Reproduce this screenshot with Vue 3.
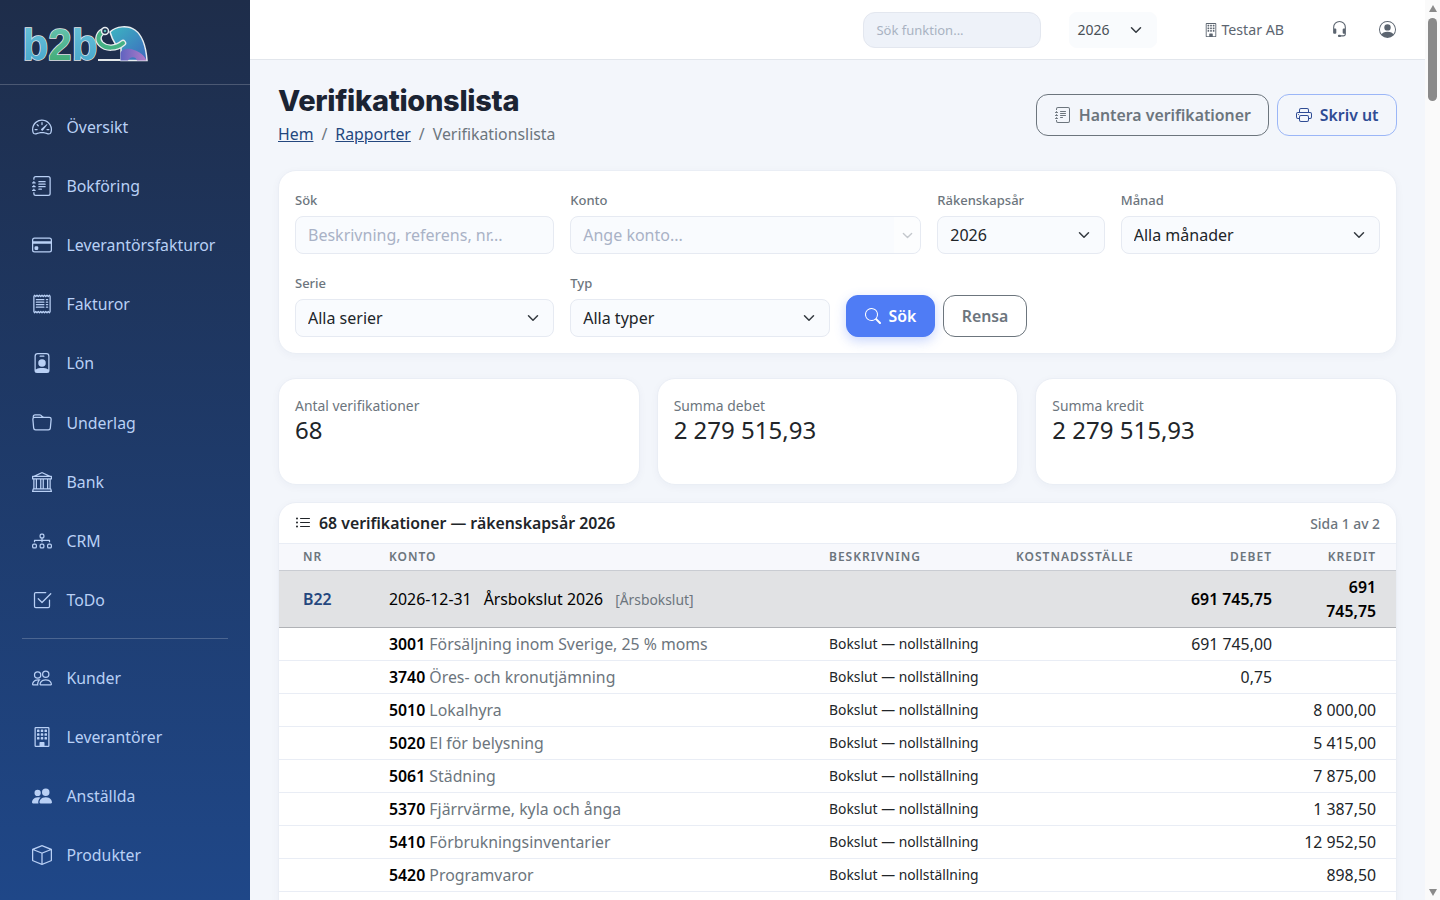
<script setup>
import { h } from 'vue'

const icons = {
  speedometer: [
    'M8 4a.5.5 0 0 1 .5.5V6a.5.5 0 0 1-1 0V4.5A.5.5 0 0 1 8 4M3.732 5.732a.5.5 0 0 1 .707 0l.915.914a.5.5 0 1 1-.708.708l-.914-.915a.5.5 0 0 1 0-.707M2 10a.5.5 0 0 1 .5-.5h1.586a.5.5 0 0 1 0 1H2.5A.5.5 0 0 1 2 10m9.5 0a.5.5 0 0 1 .5-.5h1.5a.5.5 0 0 1 0 1H12a.5.5 0 0 1-.5-.5m.754-4.246a.39.39 0 0 0-.527-.02L7.547 9.31a.91.91 0 1 0 1.302 1.258l3.434-4.297a.39.39 0 0 0-.029-.518z',
    'M0 10a8 8 0 1 1 15.547 2.661c-.442 1.253-1.845 1.602-2.932 1.25C11.309 13.488 9.475 13 8 13c-1.474 0-3.31.488-4.615.911-1.087.352-2.49.003-2.932-1.25A8 8 0 0 1 0 10m8-7a7 7 0 0 0-6.603 9.329c.203.575.923.876 1.68.63C4.397 12.533 6.358 12 8 12s3.604.532 4.923.96c.757.245 1.477-.056 1.68-.631A7 7 0 0 0 8 3'
  ],
  journal: [
    'M5 10.5a.5.5 0 0 1 .5-.5h2a.5.5 0 0 1 0 1h-2a.5.5 0 0 1-.5-.5m0-2a.5.5 0 0 1 .5-.5h5a.5.5 0 0 1 0 1h-5a.5.5 0 0 1-.5-.5m0-2a.5.5 0 0 1 .5-.5h5a.5.5 0 0 1 0 1h-5a.5.5 0 0 1-.5-.5m0-2a.5.5 0 0 1 .5-.5h5a.5.5 0 0 1 0 1h-5a.5.5 0 0 1-.5-.5',
    'M3 0h10a2 2 0 0 1 2 2v12a2 2 0 0 1-2 2H3a2 2 0 0 1-2-2v-1h1v1a1 1 0 0 0 1 1h10a1 1 0 0 0 1-1V2a1 1 0 0 0-1-1H3a1 1 0 0 0-1 1v1H1V2a2 2 0 0 1 2-2',
    'M1 5v-.5a.5.5 0 0 1 1 0V5h.5a.5.5 0 0 1 0 1h-2a.5.5 0 0 1 0-1zm0 3v-.5a.5.5 0 0 1 1 0V8h.5a.5.5 0 0 1 0 1h-2a.5.5 0 0 1 0-1zm0 3v-.5a.5.5 0 0 1 1 0v.5h.5a.5.5 0 0 1 0 1h-2a.5.5 0 0 1 0-1z'
  ],
  card: [
    'M0 4a2 2 0 0 1 2-2h12a2 2 0 0 1 2 2v8a2 2 0 0 1-2 2H2a2 2 0 0 1-2-2zm2-1a1 1 0 0 0-1 1v1h14V4a1 1 0 0 0-1-1zm13 4H1v5a1 1 0 0 0 1 1h12a1 1 0 0 0 1-1z',
    'M2 10a1 1 0 0 1 1-1h1a1 1 0 0 1 1 1v1a1 1 0 0 1-1 1H3a1 1 0 0 1-1-1z'
  ],
  receipt: [
    'M1.92.506a.5.5 0 0 1 .434.14L3 1.293l.646-.647a.5.5 0 0 1 .708 0L5 1.293l.646-.647a.5.5 0 0 1 .708 0L7 1.293l.646-.647a.5.5 0 0 1 .708 0L9 1.293l.646-.647a.5.5 0 0 1 .708 0l.646.647.646-.647a.5.5 0 0 1 .708 0l.646.647.646-.647a.5.5 0 0 1 .801.13l.5 1A.5.5 0 0 1 15 2v12a.5.5 0 0 1-.053.224l-.5 1a.5.5 0 0 1-.8.13L13 14.707l-.646.647a.5.5 0 0 1-.708 0L11 14.707l-.646.647a.5.5 0 0 1-.708 0L9 14.707l-.646.647a.5.5 0 0 1-.708 0L7 14.707l-.646.647a.5.5 0 0 1-.708 0L5 14.707l-.646.647a.5.5 0 0 1-.708 0L3 14.707l-.646.647a.5.5 0 0 1-.801-.13l-.5-1A.5.5 0 0 1 1 14V2a.5.5 0 0 1 .053-.224l.5-1a.5.5 0 0 1 .367-.27m.217 1.338L2 2.118v11.764l.137.274.51-.51a.5.5 0 0 1 .707 0l.646.647.646-.646a.5.5 0 0 1 .708 0l.646.646.646-.646a.5.5 0 0 1 .708 0l.646.646.646-.646a.5.5 0 0 1 .708 0l.646.646.646-.646a.5.5 0 0 1 .708 0l.646.646.646-.646a.5.5 0 0 1 .708 0l.509.509.137-.274V2.118l-.137-.274-.51.51a.5.5 0 0 1-.707 0L12 1.707l-.646.647a.5.5 0 0 1-.708 0L10 1.707l-.646.647a.5.5 0 0 1-.708 0L8 1.707l-.646.647a.5.5 0 0 1-.708 0L6 1.707l-.646.647a.5.5 0 0 1-.708 0L4 1.707l-.646.647a.5.5 0 0 1-.708 0z',
    'M3 4.5a.5.5 0 0 1 .5-.5h6a.5.5 0 1 1 0 1h-6a.5.5 0 0 1-.5-.5m0 2a.5.5 0 0 1 .5-.5h6a.5.5 0 1 1 0 1h-6a.5.5 0 0 1-.5-.5m0 2a.5.5 0 0 1 .5-.5h6a.5.5 0 1 1 0 1h-6a.5.5 0 0 1-.5-.5m0 2a.5.5 0 0 1 .5-.5h6a.5.5 0 0 1 0 1h-6a.5.5 0 0 1-.5-.5m8-6a.5.5 0 0 1 .5-.5h1a.5.5 0 0 1 0 1h-1a.5.5 0 0 1-.5-.5m0 2a.5.5 0 0 1 .5-.5h1a.5.5 0 0 1 0 1h-1a.5.5 0 0 1-.5-.5m0 2a.5.5 0 0 1 .5-.5h1a.5.5 0 0 1 0 1h-1a.5.5 0 0 1-.5-.5m0 2a.5.5 0 0 1 .5-.5h1a.5.5 0 0 1 0 1h-1a.5.5 0 0 1-.5-.5'
  ],
  badge: [
    'M6.5 2a.5.5 0 0 0 0 1h3a.5.5 0 0 0 0-1zM11 8a3 3 0 1 1-6 0 3 3 0 0 1 6 0',
    'M4.5 0A2.5 2.5 0 0 0 2 2.5V14a2 2 0 0 0 2 2h8a2 2 0 0 0 2-2V2.5A2.5 2.5 0 0 0 11.5 0zM3 2.5A1.5 1.5 0 0 1 4.5 1h7A1.5 1.5 0 0 1 13 2.5v10.795a4.2 4.2 0 0 0-.776-.492C11.392 12.387 10.063 12 8 12s-3.392.387-4.224.803a4.2 4.2 0 0 0-.776.492z'
  ],
  folder: [
    'M.54 3.87.5 3a2 2 0 0 1 2-2h3.672a2 2 0 0 1 1.414.586l.828.828A2 2 0 0 0 9.828 3h3.982a2 2 0 0 1 1.992 2.181l-.637 7A2 2 0 0 1 13.174 14H2.826a2 2 0 0 1-1.991-1.819l-.637-7a2 2 0 0 1 .342-1.31zM2.19 4a1 1 0 0 0-.996 1.09l.637 7a1 1 0 0 0 .995.91h10.348a1 1 0 0 0 .995-.91l.637-7A1 1 0 0 0 13.81 4zm4.69-1.707A1 1 0 0 0 6.172 2H2.5a1 1 0 0 0-1 .981l.006.139q.323-.119.684-.12h5.396z'
  ],
  bank: [
    'm8 0 6.61 3h.89a.5.5 0 0 1 .5.5v2a.5.5 0 0 1-.5.5H15v7a.5.5 0 0 1 .485.38l.5 2a.498.498 0 0 1-.485.62H.5a.498.498 0 0 1-.485-.62l.5-2A.5.5 0 0 1 1 13V6H.5a.5.5 0 0 1-.5-.5v-2A.5.5 0 0 1 .5 3h.89zM3.777 3h8.447L8 1zM2 6v7h1V6zm2 0v7h2.5V6zm3.5 0v7h1V6zm2 0v7H12V6zM13 6v7h1V6zm2-1V4H1v1zm-.39 9H1.39l-.25 1h13.72z'
  ],
  diagram: [
    'M6 3.5A1.5 1.5 0 0 1 7.5 2h1A1.5 1.5 0 0 1 10 3.5v1A1.5 1.5 0 0 1 8.5 6v1H14a.5.5 0 0 1 .5.5v1a.5.5 0 0 1-1 0V8h-5v.5a.5.5 0 0 1-1 0V8h-5v.5a.5.5 0 0 1-1 0v-1A.5.5 0 0 1 2 7h5.5V6A1.5 1.5 0 0 1 6 4.5zM8.5 5a.5.5 0 0 0 .5-.5v-1a.5.5 0 0 0-.5-.5h-1a.5.5 0 0 0-.5.5v1a.5.5 0 0 0 .5.5zM0 11.5A1.5 1.5 0 0 1 1.5 10h1A1.5 1.5 0 0 1 4 11.5v1A1.5 1.5 0 0 1 2.5 14h-1A1.5 1.5 0 0 1 0 12.5zm1.5-.5a.5.5 0 0 0-.5.5v1a.5.5 0 0 0 .5.5h1a.5.5 0 0 0 .5-.5v-1a.5.5 0 0 0-.5-.5zm4.5.5A1.5 1.5 0 0 1 7.5 10h1a1.5 1.5 0 0 1 1.5 1.5v1A1.5 1.5 0 0 1 8.5 14h-1A1.5 1.5 0 0 1 6 12.5zm1.5-.5a.5.5 0 0 0-.5.5v1a.5.5 0 0 0 .5.5h1a.5.5 0 0 0 .5-.5v-1a.5.5 0 0 0-.5-.5zm4.5.5a1.5 1.5 0 0 1 1.5-1.5h1a1.5 1.5 0 0 1 1.5 1.5v1a1.5 1.5 0 0 1-1.5 1.5h-1a1.5 1.5 0 0 1-1.5-1.5zm1.5-.5a.5.5 0 0 0-.5.5v1a.5.5 0 0 0 .5.5h1a.5.5 0 0 0 .5-.5v-1a.5.5 0 0 0-.5-.5z'
  ],
  check: [
    'M3 14.5A1.5 1.5 0 0 1 1.5 13V3A1.5 1.5 0 0 1 3 1.5h8a.5.5 0 0 1 0 1H3a.5.5 0 0 0-.5.5v10a.5.5 0 0 0 .5.5h10a.5.5 0 0 0 .5-.5V8a.5.5 0 0 1 1 0v5a1.5 1.5 0 0 1-1.5 1.5z',
    'm8.354 10.354 7-7a.5.5 0 0 0-.708-.708L8 9.293 5.354 6.646a.5.5 0 1 0-.708.708l3 3a.5.5 0 0 0 .708 0'
  ],
  people: [
    'M15 14s1 0 1-1-1-4-5-4-5 3-5 4 1 1 1 1zm-7.978-1L7 12.996c.001-.264.167-1.03.76-1.72C8.312 10.629 9.282 10 11 10c1.717 0 2.687.63 3.24 1.276.593.69.758 1.457.76 1.72l-.008.002-.014.002zM11 7a2 2 0 1 0 0-4 2 2 0 0 0 0 4m3-2a3 3 0 1 1-6 0 3 3 0 0 1 6 0M6.936 9.28a6 6 0 0 0-1.23-.247A7 7 0 0 0 5 9c-4 0-5 3-5 4q0 1 1 1h4.216A2.24 2.24 0 0 1 5 13c0-1.01.377-2.042 1.09-2.904.243-.294.526-.569.846-.816M4.92 10A5.5 5.5 0 0 0 4 13H1c0-.26.164-1.03.76-1.724.545-.636 1.492-1.256 3.16-1.275ZM1.5 5.5a3 3 0 1 1 6 0 3 3 0 0 1-6 0m3-2a2 2 0 1 0 0 4 2 2 0 0 0 0-4'
  ],
  building: [
    'M4 2.5a.5.5 0 0 1 .5-.5h1a.5.5 0 0 1 .5.5v1a.5.5 0 0 1-.5.5h-1a.5.5 0 0 1-.5-.5zm3 0a.5.5 0 0 1 .5-.5h1a.5.5 0 0 1 .5.5v1a.5.5 0 0 1-.5.5h-1a.5.5 0 0 1-.5-.5zm3.5-.5a.5.5 0 0 0-.5.5v1a.5.5 0 0 0 .5.5h1a.5.5 0 0 0 .5-.5v-1a.5.5 0 0 0-.5-.5zM4 5.5a.5.5 0 0 1 .5-.5h1a.5.5 0 0 1 .5.5v1a.5.5 0 0 1-.5.5h-1a.5.5 0 0 1-.5-.5zM7.5 5a.5.5 0 0 0-.5.5v1a.5.5 0 0 0 .5.5h1a.5.5 0 0 0 .5-.5v-1a.5.5 0 0 0-.5-.5zm2.5.5a.5.5 0 0 1 .5-.5h1a.5.5 0 0 1 .5.5v1a.5.5 0 0 1-.5.5h-1a.5.5 0 0 1-.5-.5zM4.5 8a.5.5 0 0 0-.5.5v1a.5.5 0 0 0 .5.5h1a.5.5 0 0 0 .5-.5v-1a.5.5 0 0 0-.5-.5zm2.5.5a.5.5 0 0 1 .5-.5h1a.5.5 0 0 1 .5.5v1a.5.5 0 0 1-.5.5h-1a.5.5 0 0 1-.5-.5zm3.5-.5a.5.5 0 0 0-.5.5v1a.5.5 0 0 0 .5.5h1a.5.5 0 0 0 .5-.5v-1a.5.5 0 0 0-.5-.5z',
    'M2 1a1 1 0 0 1 1-1h10a1 1 0 0 1 1 1v14a1 1 0 0 1-1 1H3a1 1 0 0 1-1-1zm11 0H3v14h3v-2.5a.5.5 0 0 1 .5-.5h3a.5.5 0 0 1 .5.5V15h3z'
  ],
  peopleFill: [
    'M7 14s-1 0-1-1 1-4 5-4 5 3 5 4-1 1-1 1zm4-6a3 3 0 1 0 0-6 3 3 0 0 0 0 6m-5.784 6A2.24 2.24 0 0 1 5 13c0-1.355.68-2.75 1.936-3.72A6.3 6.3 0 0 0 5 9c-4 0-5 3-5 4s1 1 1 1zM4.5 8a2.5 2.5 0 1 0 0-5 2.5 2.5 0 0 0 0 5'
  ],
  box: [
    'M8.186 1.113a.5.5 0 0 0-.372 0L1.846 3.5 8 5.961 14.154 3.5zM15 4.239l-6.5 2.6v7.922l6.5-2.6V4.24zM7.5 14.762V6.838L1 4.239v7.925zM7.443.184a1.5 1.5 0 0 1 1.114 0l7.129 2.852A.5.5 0 0 1 16 3.5v8.662a1 1 0 0 1-.629.928l-7.185 2.874a.5.5 0 0 1-.372 0L.63 13.09a1 1 0 0 1-.63-.928V3.5a.5.5 0 0 1 .314-.464z'
  ],
  headset: [
    'M8 1a5 5 0 0 0-5 5v1h1a1 1 0 0 1 1 1v3a1 1 0 0 1-1 1H3a1 1 0 0 1-1-1V6a6 6 0 1 1 12 0v6a2.5 2.5 0 0 1-2.5 2.5H9.366a1 1 0 0 1-.866.5h-1a1 1 0 1 1 0-2h1a1 1 0 0 1 .866.5H11.5A1.5 1.5 0 0 0 13 12h-1a1 1 0 0 1-1-1V8a1 1 0 0 1 1-1h1V6a5 5 0 0 0-5-5'
  ],
  person: [
    'M11 6a3 3 0 1 1-6 0 3 3 0 0 1 6 0',
    'M0 8a8 8 0 1 1 16 0A8 8 0 0 1 0 8m8-7a7 7 0 0 0-5.468 11.37C3.242 11.226 4.805 10 8 10s4.757 1.225 5.468 2.37A7 7 0 0 0 8 1'
  ],
  printer: [
    'M2.5 8a.5.5 0 1 0 0-1 .5.5 0 0 0 0 1',
    'M5 1a2 2 0 0 0-2 2v2H2a2 2 0 0 0-2 2v3a2 2 0 0 0 2 2h1v1a2 2 0 0 0 2 2h6a2 2 0 0 0 2-2v-1h1a2 2 0 0 0 2-2V7a2 2 0 0 0-2-2h-1V3a2 2 0 0 0-2-2zM4 3a1 1 0 0 1 1-1h6a1 1 0 0 1 1 1v2H4zm1 5a2 2 0 0 0-2 2v1H2a1 1 0 0 1-1-1V7a1 1 0 0 1 1-1h12a1 1 0 0 1 1 1v3a1 1 0 0 1-1 1h-1v-1a2 2 0 0 0-2-2zm7 2v3a1 1 0 0 1-1 1H5a1 1 0 0 1-1-1v-3a1 1 0 0 1 1-1h6a1 1 0 0 1 1 1'
  ],
  search: [
    'M11.742 10.344a6.5 6.5 0 1 0-1.397 1.398h-.001q.044.06.098.115l3.85 3.85a1 1 0 0 0 1.415-1.414l-3.85-3.85a1 1 0 0 0-.115-.1zM12 6.5a5.5 5.5 0 1 1-11 0 5.5 5.5 0 0 1 11 0'
  ],
  list: [
    'M5 11.5a.5.5 0 0 1 .5-.5h9a.5.5 0 0 1 0 1h-9a.5.5 0 0 1-.5-.5m0-4a.5.5 0 0 1 .5-.5h9a.5.5 0 0 1 0 1h-9a.5.5 0 0 1-.5-.5m0-4a.5.5 0 0 1 .5-.5h9a.5.5 0 0 1 0 1h-9a.5.5 0 0 1-.5-.5m-3 1a1 1 0 1 0 0-2 1 1 0 0 0 0 2m0 4a1 1 0 1 0 0-2 1 1 0 0 0 0 2m0 4a1 1 0 1 0 0-2 1 1 0 0 0 0 2'
  ]
}

const Icon = ({ name }) =>
  h('svg', { viewBox: '0 0 16 16', fill: 'currentColor' },
    icons[name].map((d) => h('path', { d, 'fill-rule': 'evenodd' })))

const navTop = [
  { label: 'Översikt', icon: 'speedometer' },
  { label: 'Bokföring', icon: 'journal' },
  { label: 'Leverantörsfakturor', icon: 'card' },
  { label: 'Fakturor', icon: 'receipt' },
  { label: 'Lön', icon: 'badge' },
  { label: 'Underlag', icon: 'folder' },
  { label: 'Bank', icon: 'bank' },
  { label: 'CRM', icon: 'diagram' },
  { label: 'ToDo', icon: 'check' }
]
const navBottom = [
  { label: 'Kunder', icon: 'people' },
  { label: 'Leverantörer', icon: 'building' },
  { label: 'Anställda', icon: 'peopleFill' },
  { label: 'Produkter', icon: 'box' }
]

const stats = [
  { label: 'Antal verifikationer', value: '68' },
  { label: 'Summa debet', value: '2 279 515,93' },
  { label: 'Summa kredit', value: '2 279 515,93' }
]

const rows = [
  { konto: '3001', name: 'Försäljning inom Sverige, 25 % moms', debet: '691 745,00', kredit: '' },
  { konto: '3740', name: 'Öres- och kronutjämning', debet: '0,75', kredit: '' },
  { konto: '5010', name: 'Lokalhyra', debet: '', kredit: '8 000,00' },
  { konto: '5020', name: 'El för belysning', debet: '', kredit: '5 415,00' },
  { konto: '5061', name: 'Städning', debet: '', kredit: '7 875,00' },
  { konto: '5370', name: 'Fjärrvärme, kyla och ånga', debet: '', kredit: '1 387,50' },
  { konto: '5410', name: 'Förbrukningsinventarier', debet: '', kredit: '12 952,50' },
  { konto: '5420', name: 'Programvaror', debet: '', kredit: '898,50' }
]
</script>

<template>
  <div class="app">
    <aside class="sidebar">
      <div class="logo">
        <svg viewBox="0 0 126 38" width="126" height="38">
          <defs>
            <linearGradient id="lb" x1="0" y1="0" x2="0" y2="1">
              <stop offset="0" stop-color="#6cc4da" />
              <stop offset="1" stop-color="#45a4ca" />
            </linearGradient>
            <linearGradient id="lg" x1="0" y1="0" x2="0" y2="1">
              <stop offset="0" stop-color="#6cc6bc" />
              <stop offset="1" stop-color="#3ca86a" />
            </linearGradient>
            <linearGradient id="le" x1="0" y1="0" x2="1" y2="1">
              <stop offset="0" stop-color="#3cb6c2" />
              <stop offset="1" stop-color="#3d68bd" />
            </linearGradient>
            <linearGradient id="lp" x1="0" y1="0" x2="1" y2="0">
              <stop offset="0" stop-color="#5f63c0" />
              <stop offset="1" stop-color="#b27bc8" />
            </linearGradient>
          </defs>
          <text class="logo-text" x="0.500" y="34.500" textLength="75" lengthAdjust="spacingAndGlyphs"><tspan fill="url(#lb)">b</tspan><tspan fill="url(#lg)">2</tspan><tspan fill="url(#lb)">b</tspan></text>
          <path d="M76 35H100" stroke="#e4e8ea" stroke-width="2" />
          <path d="M88 7C94 1 106 0 113 5C120 10 124 22 125 35.500H99V23C95 22 91 17 88 7Z" fill="url(#le)" stroke="#e8edf0" stroke-width="1.500" />
          <path d="M98.500 35.500V28C100 23 108 23 112 25C118 27 122 30 124.500 35.500H115C114 31 108 31 106 35.500Z" fill="url(#lp)" />
          <path d="M101 18C94 24 84 24 79 19C74 14 77 7 83 6" fill="none" stroke="#e8edf0" stroke-width="6.500" stroke-linecap="round" />
          <path d="M101 18C94 24 84 24 79 19C74 14 77 7 83 6" fill="none" stroke="#45b284" stroke-width="4" stroke-linecap="round" />
          <circle cx="83" cy="6" r="3.500" fill="#1e2f4d" stroke="#e8edf0" stroke-width="1.500" />
          <circle cx="83" cy="6" r="1.300" fill="#5ab8b0" />
        </svg>
      </div>
      <nav class="nav">
        <a v-for="item in navTop" :key="item.label" class="nav-item">
          <Icon :name="item.icon" class="nav-icon" />
          <span>{{ item.label }}</span>
        </a>
        <div class="nav-divider"></div>
        <a v-for="item in navBottom" :key="item.label" class="nav-item">
          <Icon :name="item.icon" class="nav-icon" />
          <span>{{ item.label }}</span>
        </a>
      </nav>
    </aside>

    <div class="main">
      <header class="topbar">
        <input class="top-search" type="text" placeholder="Sök funktion..." />
        <div class="select-wrap top-year">
          <select>
            <option>2026</option>
            <option>2025</option>
          </select>
          <svg class="chevron" viewBox="0 0 16 16"><path d="m2 5 6 6 6-6" /></svg>
        </div>
        <div class="company">
          <Icon name="building" class="company-icon" />
          <span>Testar AB</span>
        </div>
        <Icon name="headset" class="top-icon headset" />
        <Icon name="person" class="top-icon" />
      </header>

      <main class="content">
        <div class="page-head">
          <div>
            <h1>Verifikationslista</h1>
            <div class="breadcrumb">
              <a>Hem</a>
              <span class="sep">/</span>
              <a>Rapporter</a>
              <span class="sep">/</span>
              <span>Verifikationslista</span>
            </div>
          </div>
          <div class="head-actions">
            <button class="btn btn-gray"><Icon name="journal" class="btn-icon" />Hantera verifikationer</button>
            <button class="btn btn-blue"><Icon name="printer" class="btn-icon" />Skriv ut</button>
          </div>
        </div>

        <section class="card filters">
          <div class="field col-3">
            <label>Sök</label>
            <input type="text" placeholder="Beskrivning, referens, nr..." />
          </div>
          <div class="field col-4">
            <label>Konto</label>
            <div class="combo">
              <input type="text" placeholder="Ange konto..." />
              <span class="combo-toggle">
                <svg viewBox="0 0 16 16"><path d="m2 5 6 6 6-6" /></svg>
              </span>
            </div>
          </div>
          <div class="field col-2">
            <label>Räkenskapsår</label>
            <div class="select-wrap">
              <select><option>2026</option><option>2025</option></select>
              <svg class="chevron" viewBox="0 0 16 16"><path d="m2 5 6 6 6-6" /></svg>
            </div>
          </div>
          <div class="field col-3">
            <label>Månad</label>
            <div class="select-wrap">
              <select><option>Alla månader</option></select>
              <svg class="chevron" viewBox="0 0 16 16"><path d="m2 5 6 6 6-6" /></svg>
            </div>
          </div>
          <div class="field col-3">
            <label>Serie</label>
            <div class="select-wrap">
              <select><option>Alla serier</option></select>
              <svg class="chevron" viewBox="0 0 16 16"><path d="m2 5 6 6 6-6" /></svg>
            </div>
          </div>
          <div class="field col-3">
            <label>Typ</label>
            <div class="select-wrap">
              <select><option>Alla typer</option></select>
              <svg class="chevron" viewBox="0 0 16 16"><path d="m2 5 6 6 6-6" /></svg>
            </div>
          </div>
          <div class="filter-actions">
            <button class="btn btn-primary"><Icon name="search" class="btn-icon" />Sök</button>
            <button class="btn btn-gray">Rensa</button>
          </div>
        </section>

        <section class="stats">
          <div v-for="stat in stats" :key="stat.label" class="card stat">
            <div class="stat-label">{{ stat.label }}</div>
            <div class="stat-value">{{ stat.value }}</div>
          </div>
        </section>

        <section class="card table-card">
          <div class="table-title">
            <div class="table-heading">
              <Icon name="list" class="list-icon" />
              <span>68 verifikationer — räkenskapsår 2026</span>
            </div>
            <span class="page-info">Sida 1 av 2</span>
          </div>
          <table>
            <colgroup>
              <col class="c-nr" />
              <col class="c-konto" />
              <col class="c-text" />
              <col class="c-kst" />
              <col class="c-debet" />
              <col class="c-kredit" />
            </colgroup>
            <thead>
              <tr>
                <th>Nr</th>
                <th>Konto</th>
                <th>Beskrivning</th>
                <th>Kostnadsställe</th>
                <th class="num">Debet</th>
                <th class="num">Kredit</th>
              </tr>
            </thead>
            <tbody>
              <tr class="group">
                <td class="ver-nr">B22</td>
                <td colspan="3">
                  <span class="ver-date">2026-12-31</span>
                  <span class="ver-text">Årsbokslut 2026</span>
                  <span class="ver-type">[Årsbokslut]</span>
                </td>
                <td class="num strong">691 745,75</td>
                <td class="num strong">691 745,75</td>
              </tr>
              <tr v-for="row in rows" :key="row.konto" class="line">
                <td></td>
                <td><strong>{{ row.konto }}</strong> <span class="acc-name">{{ row.name }}</span></td>
                <td class="line-text">Bokslut — nollställning</td>
                <td></td>
                <td class="num">{{ row.debet }}</td>
                <td class="num">{{ row.kredit }}</td>
              </tr>
              <tr class="line filler"><td colspan="6"></td></tr>
            </tbody>
          </table>
        </section>
      </main>
    </div>

    <div class="scrollbar">
      <span class="arrow-up"></span>
      <span class="thumb"></span>
      <span class="arrow-down"></span>
    </div>
  </div>
</template>

<style>
html, body {
  background: #f3f6fb;
  overflow: hidden;
}
</style>

<style scoped>
.app {
  display: flex;
  height: 100vh;
  overflow: hidden;
  font-family: "Noto Sans", "Open Sans", sans-serif;
  font-size: 15.840px;
  color: #212529;
}

/* sidebar */
.sidebar {
  flex: 0 0 250px;
  overflow: hidden;
  background: linear-gradient(180deg, #1e2d4a 0%, #1f4788 100%);
}

.logo {
  height: 59px;
  padding: 25px 0 0 22px;
  border-bottom: 1px solid rgba(255, 255, 255, 0.2);
}

.logo svg {
  display: block;
  overflow: visible;
}

.logo-text {
  font-family: "Liberation Sans", sans-serif;
  font-weight: 700;
  font-size: 45px;
  stroke: #e4e8ea;
  stroke-width: 1.500px;
  paint-order: stroke;
}

.nav {
  padding-top: 12.500px;
}

.nav-item {
  display: flex;
  align-items: center;
  height: 59.120px;
  padding-left: 32px;
  color: #b9d0f5;
}

.nav-icon {
  width: 20px;
  height: 20px;
  margin-right: 14.500px;
  flex: none;
}

.nav-divider {
  height: 1px;
  margin: 9px 22px;
  background: rgba(255, 255, 255, 0.2);
}

/* topbar */
.main {
  flex: 1;
  min-width: 0;
  overflow-y: auto;
  scrollbar-width: none;
}

.topbar {
  display: flex;
  align-items: center;
  height: 59px;
  padding-right: 29px;
  background: #fff;
  border-bottom: 1px solid #e2e6ec;
}

.top-search {
  width: 178px;
  height: 36px;
  box-sizing: border-box;
  margin-left: auto;
  padding: 0 12px;
  font: inherit;
  font-size: 13px;
  background: #eef2f9;
  border: 1px solid #e3e7ef;
  border-radius: 12px;
  outline: none;
}

.top-search::placeholder {
  color: #a9b2c2;
}

.top-year {
  width: 88px;
  margin-left: 28px;
}

.top-year select {
  height: 36px;
  padding: 0 7px;
  font-size: 14px;
  color: #495057;
}

.company {
  display: flex;
  align-items: center;
  margin-left: 47px;
  font-size: 14.200px;
  color: #5c6570;
}

.company-icon {
  width: 14px;
  height: 14px;
  margin-right: 3px;
}

.top-icon {
  width: 17px;
  height: 17px;
  color: #5c6570;
  margin-left: 31px;
}

.headset {
  margin-left: 47px;
}

/* innehåll */
.content {
  padding: 22px 28px 40px;
}

.page-head {
  display: flex;
  justify-content: space-between;
  align-items: center;
  margin-bottom: 24px;
}

h1 {
  margin: 0;
  padding-top: 1px;
  font-family: Inter, "Noto Sans", sans-serif;
  font-size: 29px;
  font-weight: 800;
  line-height: 36px;
  letter-spacing: -0.3px;
  color: #1b2433;
}

.breadcrumb {
  margin-top: 3px;
  line-height: 24px;
  color: #6c757d;
}

.breadcrumb a {
  color: #24477e;
  text-decoration: underline;
}

.sep {
  margin: 0 8px;
}

.head-actions {
  display: flex;
  gap: 8px;
  margin-top: 2px;
}

.btn {
  display: inline-flex;
  align-items: center;
  justify-content: center;
  height: 42px;
  padding: 0 17.500px;
  font: inherit;
  font-weight: 600;
  background: transparent;
  border: 1px solid #6c757d;
  border-radius: 12px;
  color: #6c757d;
}

.btn-blue {
  border-color: #9bb6f7;
  color: #2f4c94;
}

.btn-primary {
  padding: 0 18px;
  background: #4f7cf5;
  border-color: #4f7cf5;
  color: #fff;
  box-shadow: 0 4px 12px rgba(79, 124, 245, 0.3);
}

.btn-icon {
  width: 16px;
  height: 16px;
  margin-right: 8px;
}

.card {
  background: #fff;
  border: 1px solid #eaeef5;
  border-radius: 18px;
  box-shadow: 0 2px 8px rgba(30, 50, 90, 0.04);
}

/* filter */
.filters {
  display: grid;
  grid-template-columns: repeat(12, 1fr);
  column-gap: 16px;
  row-gap: 17px;
  padding: 17px 16px 16px;
  margin-bottom: 24px;
}

.col-2 { grid-column: span 2; }
.col-3 { grid-column: span 3; }
.col-4 { grid-column: span 4; }

.field label {
  display: block;
  height: 28px;
  padding-top: 3px;
  box-sizing: border-box;
  font-size: 13px;
  font-weight: 500;
  color: #6c757d;
}

.field input,
.field select {
  display: block;
  width: 100%;
  height: 38px;
  box-sizing: border-box;
  padding: 0 12px;
  font: inherit;
  font-size: 16px;
  color: #212529;
  background: #f9fbfe;
  border: 1px solid #e6eaf2;
  border-radius: 8px;
  outline: none;
}

.field input::placeholder {
  color: #a9b2c6;
}

.select-wrap {
  position: relative;
}

select {
  appearance: none;
  display: block;
  width: 100%;
  font: inherit;
  background: #f9fbfd;
  border: 1px solid #f9fbfd;
  border-radius: 8px;
  outline: none;
}

.chevron {
  position: absolute;
  right: 13px;
  top: 50%;
  width: 16px;
  height: 12px;
  margin-top: -6px;
  pointer-events: none;
}

.chevron path,
.combo-toggle path {
  fill: none;
  stroke: #343a40;
  stroke-width: 2;
  stroke-linecap: round;
  stroke-linejoin: round;
}

.combo {
  position: relative;
}

.combo-toggle {
  position: absolute;
  top: 1px;
  right: 1px;
  bottom: 1px;
  width: 26px;
  display: flex;
  align-items: center;
  justify-content: center;
  background: #fcfdfe;
  border-radius: 0 8px 8px 0;
}

.combo-toggle svg {
  width: 11px;
  height: 11px;
}

.combo-toggle path {
  stroke: #c4c8cd;
}

.filter-actions {
  grid-column: span 6;
  display: flex;
  align-items: flex-end;
  gap: 8px;
}

/* summeringar */
.stats {
  display: grid;
  grid-template-columns: repeat(3, 1fr);
  gap: 17px;
  margin-bottom: 17px;
}

.stat {
  height: 107px;
  box-sizing: border-box;
  padding: 17px 16px 16px;
}

.stat-label {
  font-size: 13.900px;
  line-height: 20px;
  color: #6c757d;
}

.stat-value {
  font-size: 24px;
  line-height: 27px;
  color: #212529;
}

/* tabell */
.table-card {
  overflow: hidden;
}

.table-title {
  display: flex;
  justify-content: space-between;
  align-items: center;
  height: 40px;
  padding: 0 16px;
}

.table-heading {
  display: flex;
  align-items: center;
  font-weight: 600;
  color: #212529;
}

.list-icon {
  width: 16px;
  height: 16px;
  margin-right: 8px;
}

.page-info {
  font-size: 13.860px;
  font-weight: 500;
  color: #6c757d;
}

table {
  width: 100%;
  table-layout: fixed;
  border-collapse: collapse;
}

.c-nr { width: 96px; }
.c-konto { width: 440px; }
.c-text { width: 187px; }
.c-kst { width: 150px; }
.c-debet { width: 134px; }
.c-kredit { width: 110px; }

th {
  height: 25px;
  padding: 0 14px 1px;
  font-size: 12px;
  font-weight: 600;
  line-height: 16px;
  letter-spacing: 1px;
  text-transform: uppercase;
  text-align: left;
  color: #6c757d;
  background: #f7f8fc;
  border-top: 1px solid #e9edf5;
  border-bottom: 1px solid #c9ccd2;
}

td {
  padding: 4px 14px;
}

th:first-child,
td:first-child {
  padding-left: 24px;
}

th:last-child,
td:last-child {
  padding-right: 20px;
}

.num {
  text-align: right;
}

.strong {
  font-weight: 600;
  color: #000;
}

.group td {
  background: #e1e2e4;
  border-bottom: 1px solid #b0b2b6;
  line-height: 24px;
}

.ver-nr {
  font-weight: 600;
  color: #24477e;
}

.ver-date,
.ver-text {
  margin-right: 12px;
  color: #000;
}

.ver-type {
  font-size: 13.860px;
  color: #6c757d;
}

.line td {
  height: 32px;
  box-sizing: border-box;
  line-height: 24px;
  border-bottom: 1px solid #e9edf5;
}

.line strong {
  font-weight: 600;
  color: #000;
}

.acc-name {
  color: #6c757d;
}

.line-text {
  font-size: 13.860px;
  color: #212529;
}

/* rullningslist */
.scrollbar {
  flex: 0 0 15px;
  display: flex;
  flex-direction: column;
  align-items: center;
  background: #fafafa;
}

.arrow-up,
.arrow-down {
  width: 0;
  height: 0;
  border-left: 4.500px solid transparent;
  border-right: 4.500px solid transparent;
}

.arrow-up {
  margin-top: 5px;
  border-bottom: 7px solid #8a8a8a;
}

.thumb {
  width: 9px;
  height: 83px;
  margin-top: 6px;
  border-radius: 4.500px;
  background: #8a8a8a;
}

.arrow-down {
  margin-top: auto;
  margin-bottom: 4px;
  border-top: 7px solid #8a8a8a;
}
</style>
